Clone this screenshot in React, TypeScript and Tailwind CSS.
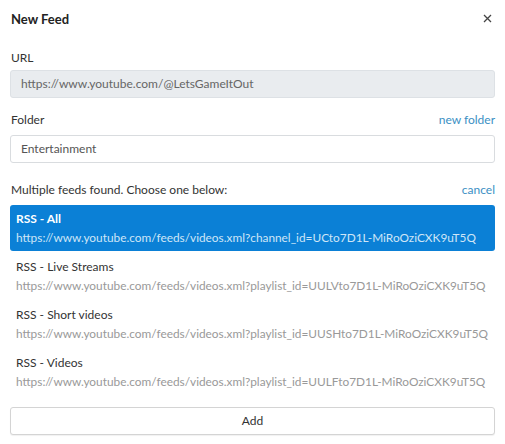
import React from 'react';

// 찾은 피드 목록
const FEEDS = [
  { title: 'RSS - All', url: 'https://www.youtube.com/feeds/videos.xml?channel_id=UCto7D1L-MiRoOziCXK9uT5Q' },
  { title: 'RSS - Live Streams', url: 'https://www.youtube.com/feeds/videos.xml?playlist_id=UULVto7D1L-MiRoOziCXK9uT5Q' },
  { title: 'RSS - Short videos', url: 'https://www.youtube.com/feeds/videos.xml?playlist_id=UUSHto7D1L-MiRoOziCXK9uT5Q' },
  { title: 'RSS - Videos', url: 'https://www.youtube.com/feeds/videos.xml?playlist_id=UULFto7D1L-MiRoOziCXK9uT5Q' },
];

export default function App() {
  const selected = 0;

  return (
    <div className="h-[444px] w-[505px] bg-white px-[10px] font-['Lato',sans-serif] text-[12px] text-[#333]">
      {/* Header */}
      <div className="flex h-[40px] items-center justify-between pl-px">
        <h1 className="text-[13px] font-bold text-[#222]">New Feed</h1>
        <svg width="9" height="9" viewBox="0 0 9 9" className="mr-[3px] mb-[4px]" stroke="#444" strokeWidth="1.3">
          <path d="M1 1L8 8M8 1L1 8" />
        </svg>
      </div>

      {/* URL */}
      <div className="mt-[9px] mb-[3px] pl-px leading-[18px]">URL</div>
      <div className="flex h-[28px] items-center rounded-[3px] border border-[#dde1e5] bg-[#e9ecef] px-[10px] text-[#666]">
        https://www.youtube.com/@LetsGameItOut
      </div>

      {/* Folder */}
      <div className="mt-[13px] mb-[6px] flex justify-between pl-px leading-[18px]">
        <span>Folder</span>
        <span className="text-[#3b8fc4]">new folder</span>
      </div>
      <div className="flex h-[28px] items-center rounded-[3px] border border-[#d9dcdf] bg-white px-[10px] text-[#555]">
        Entertainment
      </div>

      {/* Feed list */}
      <div className="mt-[18px] mb-[6px] flex justify-between pl-px leading-[18px]">
        <span>Multiple feeds found. Choose one below:</span>
        <span className="text-[#3b8fc4]">cancel</span>
      </div>
      <div className="flex flex-col gap-[2px]">
        {FEEDS.map((feed, idx) => (
          <div
            key={feed.url}
            className={
              idx === selected
                ? 'flex h-[46px] flex-col justify-center rounded-[3px] bg-[#0b80d6] px-[6px] text-white'
                : 'flex h-[46px] flex-col justify-center rounded-[3px] px-[6px]'
            }
          >
            <div className={idx === selected ? 'leading-[19px] font-bold' : 'leading-[19px] text-[#333]'}>
              {feed.title}
            </div>
            <div
              className={
                idx === selected
                  ? 'text-[11.85px] leading-[19px] whitespace-nowrap text-[#cfe6f7]'
                  : 'text-[11.85px] leading-[19px] whitespace-nowrap text-[#999]'
              }
            >
              {feed.url}
            </div>
          </div>
        ))}
      </div>

      {/* Add */}
      <button className="mt-[12px] flex h-[28px] w-full items-center justify-center rounded-[3px] border border-[#d4d4d4] bg-white text-[#333] shadow-[0_1px_1px_rgba(0,0,0,0.06)]">
        Add
      </button>
    </div>
  );
}
